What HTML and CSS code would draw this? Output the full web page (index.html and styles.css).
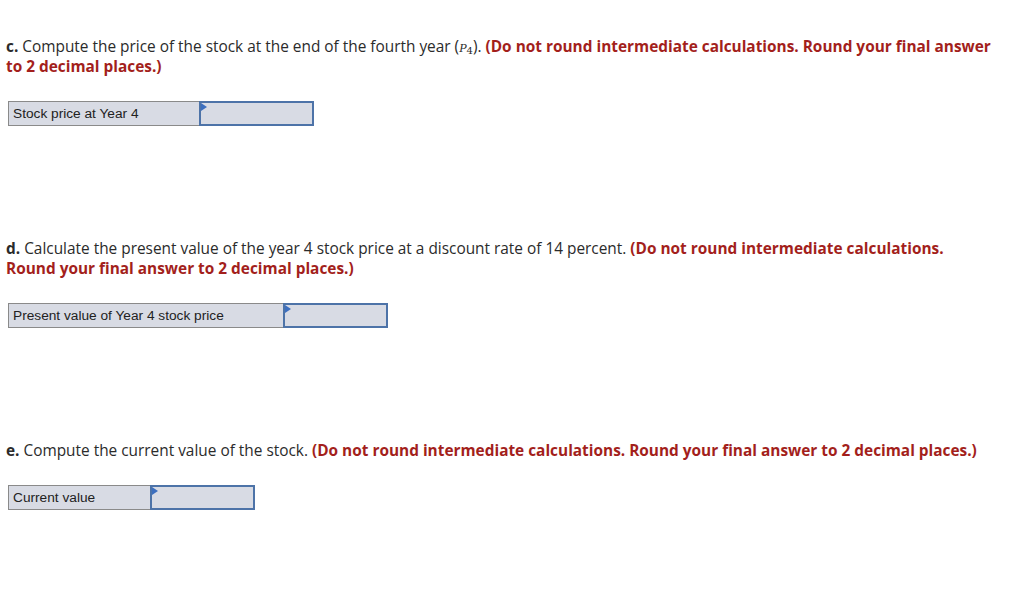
FILE: index.html
```html
<!DOCTYPE html>
<html>
<head>
<meta charset="utf-8">
<link rel="stylesheet" href="styles.css">
</head>
<body>
<div class="page">
  <section class="part">
    <p class="q"><b>c.</b> Compute the price of the stock at the end of the fourth year (<i class="math">P<span class="sub">4</span></i>). <span class="note">(Do not round intermediate calculations. Round your final answer to 2 decimal places.)</span></p>
    <div class="answer">
      <div class="label w-c">Stock price at Year 4</div>
      <div class="input"><span class="flag"></span></div>
    </div>
  </section>
  <section class="part">
    <p class="q"><b>d.</b> Calculate the present value of the year 4 stock price at a discount rate of 14 percent. <span class="note">(Do not round intermediate calculations. Round your final answer to 2 decimal places.)</span></p>
    <div class="answer">
      <div class="label w-d">Present value of Year 4 stock price</div>
      <div class="input"><span class="flag"></span></div>
    </div>
  </section>
  <section class="part">
    <p class="q"><b>e.</b> Compute the current value of the stock. <span class="note">(Do not round intermediate calculations. Round your final answer to 2 decimal places.)</span></p>
    <div class="answer">
      <div class="label w-e">Current value</div>
      <div class="input"><span class="flag"></span></div>
    </div>
  </section>
</div>
</body>
</html>
```
FILE: styles.css
```css
html, body { margin: 0; padding: 0; background: #fff; }
.page {
  padding: 37px 20px 0 6px;
  font-family: "Open Sans", "Liberation Sans", sans-serif;
  color: #2b2b2b;
  display: flex;
  flex-direction: column;
  gap: 113px;
}
.q {
  margin: 0;
  font-size: 15.4px;
  line-height: 20px;
  max-width: 988px;
}
.q b { font-weight: 700; }
.math { font-family: "DejaVu Serif", serif; font-size: 11px; line-height: 0; }
.math .sub { font-size: 10px; font-style: normal; position: relative; top: 2px; }
.note { color: #a31f1c; font-weight: 700; }
.answer {
  display: flex;
  margin: 24px 0 0 2px;
  height: 25px;
}
.label {
  box-sizing: border-box;
  background: #d8dbe4;
  border: 1px solid #8a8a8a;
  border-right: none;
  font-family: "Liberation Sans", Arial, sans-serif;
  font-size: 13.7px;
  color: #222;
  padding: 0 4px;
  line-height: 23px;
}
.w-c { width: 191px; }
.w-d { width: 275px; }
.w-e { width: 142px; }
.input {
  position: relative;
  box-sizing: border-box;
  width: 115px;
  background: #d8dbe4;
  border: 2px solid #4d73a8;
}
.w-e + .input { width: 105px; }
.w-d + .input { width: 105px; }
.flag {
  position: absolute;
  top: 0;
  left: 0;
  width: 0; height: 0;
  border-top: 4px solid transparent;
  border-bottom: 4px solid transparent;
  border-left: 6px solid #3d6fbf;
}
```
